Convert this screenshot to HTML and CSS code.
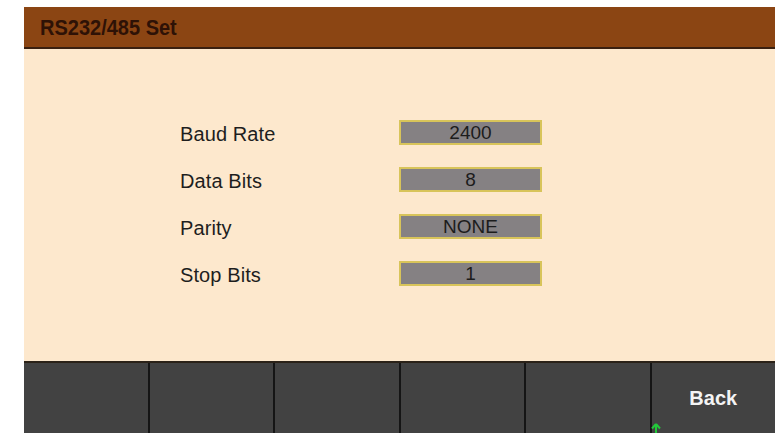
FILE: index.html
```html
<!DOCTYPE html>
<html>
<head>
<meta charset="utf-8">
<link rel="stylesheet" href="styles.css">
</head>
<body>
<div class="screen">
  <div class="header"><span class="title">RS232/485 Set</span></div>
  <div class="content">
    <div class="form">
      <div class="label">Baud Rate</div><div class="value">2400</div>
      <div class="label">Data Bits</div><div class="value">8</div>
      <div class="label">Parity</div><div class="value">NONE</div>
      <div class="label">Stop Bits</div><div class="value">1</div>
    </div>
  </div>
  <div class="footer">
    <div class="key"></div>
    <div class="key"></div>
    <div class="key"></div>
    <div class="key"></div>
    <div class="key"></div>
    <div class="key back">Back</div>
    <svg class="arrow" width="10" height="11" viewBox="0 0 10 11"><path d="M5 1 L1 5.5 M5 1 L9 5.5 M5 1 V11" stroke="#22c83a" stroke-width="2" fill="none"/></svg>
  </div>
</div>
</body>
</html>
```
FILE: styles.css
```css
html, body { margin: 0; padding: 0; background: #ffffff; }
body { font-family: "Liberation Sans", Arial, sans-serif; }
.screen {
  margin: 7px 0 0 24px;
  width: 751px;
  position: relative;
}
.header {
  height: 40px;
  background: #8b4513;
  border-bottom: 2px solid #3a2010;
  display: flex;
  align-items: center;
  padding-left: 16px;
}
.title {
  font-weight: bold;
  font-size: 20px;
  color: #2e1206;
  display: inline-block;
  transform: scaleY(1.08);
}
.content {
  background: #fde8cd;
  border-bottom: 2px solid #2b2218;
  padding-top: 71px;
  box-sizing: border-box;
  height: 314px;
}
.form {
  display: grid;
  grid-template-columns: 219px 143px;
  grid-auto-rows: 25px;
  row-gap: 22px;
  padding-left: 156px;
}
.label {
  font-size: 20px;
  letter-spacing: 0.1px;
  color: #1e1e1e;
  display: flex;
  align-items: center;
  padding-top: 3px;
}
.value {
  background: #858183;
  border: 2px solid #d8c45a;
  box-sizing: border-box;
  font-size: 19px;
  color: #1c1c1c;
  display: flex;
  align-items: center;
  justify-content: center;
  padding-top: 1px;
}
.footer {
  display: flex;
  height: 70px;
  background: #424242;
  position: relative;
}
.key {
  flex: 1;
  border-left: 2px solid #151515;
  display: flex;
  align-items: center;
  justify-content: center;
}
.key:first-child { border-left: none; }
.back {
  color: #f4f4f4;
  font-weight: bold;
  font-size: 20px;
}
.arrow {
  position: absolute;
  left: 627px;
  top: 60px;
}
```
